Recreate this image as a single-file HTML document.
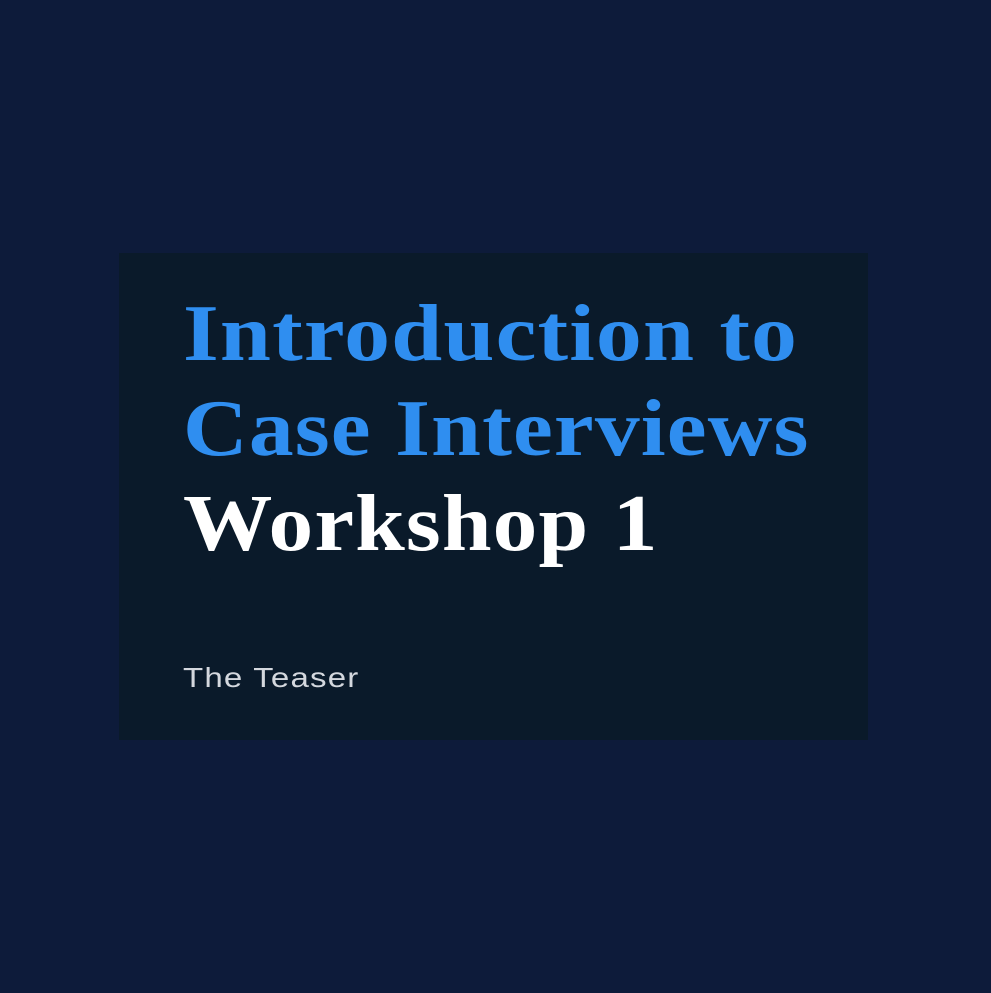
<!DOCTYPE html>
<html><head><meta charset="utf-8"><style>
html,body{margin:0;padding:0;width:991px;height:993px;background:#0d1b3a;overflow:hidden}
.card{position:absolute;left:119px;top:253px;width:749px;height:487px;background:#0a1a2a}
.t{position:absolute;left:183px;font-family:"Liberation Serif",serif;font-weight:bold;font-size:80px;line-height:95px;white-space:nowrap;letter-spacing:1px;transform-origin:0 0}
.s{position:absolute;left:183px;top:658px;font-family:"Liberation Sans",sans-serif;font-size:28px;color:#d4d8de;line-height:40px;letter-spacing:1px;transform-origin:0 0;transform:scaleX(1.18)}
</style></head><body>
<div class="card"></div>
<div class="t" style="top:287px;color:#2f8ef0;transform:scaleX(1.148)">Introduction to</div>
<div class="t" style="top:382px;color:#2f8ef0;transform:scaleX(1.12)">Case Interviews</div>
<div class="t" style="top:477px;color:#fff;transform:scaleX(1.117)">Workshop 1</div>
<div class="s">The Teaser</div>
</body></html>
